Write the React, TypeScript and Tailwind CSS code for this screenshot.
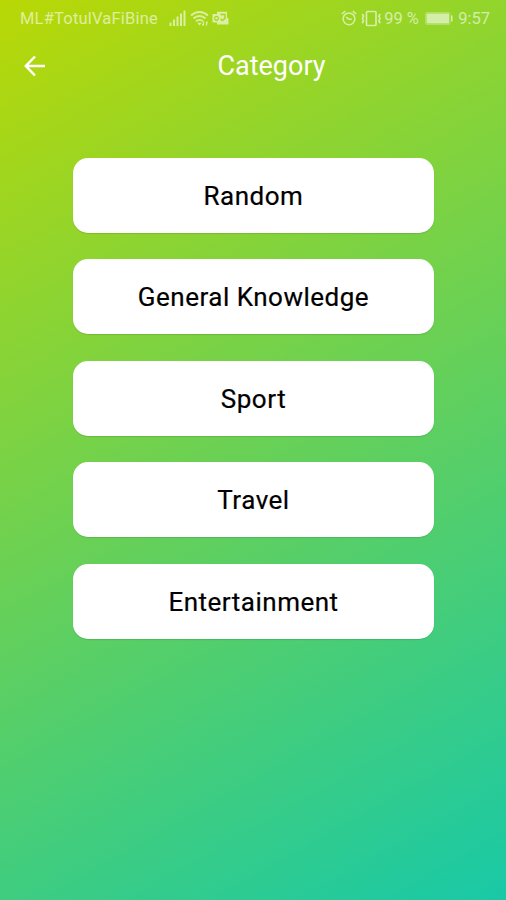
const categories = ["Random", "General Knowledge", "Sport", "Travel", "Entertainment"];

const SignalIcon = () => (
  <svg width="18" height="17" viewBox="0 0 18 17" fill="currentColor">
    <rect x="0.5" y="12.5" width="2" height="3.5" />
    <rect x="4" y="9.5" width="2" height="6.5" />
    <rect x="7.5" y="6.5" width="2" height="9.5" />
    <rect x="11" y="3.5" width="2" height="12.5" />
    <rect x="14.5" y="0.5" width="2" height="15.5" />
  </svg>
);

const WifiIcon = () => (
  <svg width="19" height="17" viewBox="0 0 19 17" fill="none" stroke="currentColor" strokeWidth="1.9">
    <path d="M1 5.5C6 0.8 13 0.8 18 5.5" />
    <path d="M3.5 8.5C7 5.2 12 5.2 15.5 8.5" />
    <path d="M6 11.3C8 9.5 11 9.5 13 11.3" />
    <path d="M7.2 12.7L9.5 15.5L11.8 12.7Z" fill="currentColor" stroke="none" />
    <path d="M13.5 11.5V15.5M12.3 14.2L13.5 15.6M16.5 15.8V11.8M17.7 13L16.5 11.6" strokeWidth="1.2" />
  </svg>
);

const OutlookIcon = () => (
  <svg width="17" height="15" viewBox="0 0 17 15">
    <path
      fill="currentColor"
      fillRule="evenodd"
      d="M0.5 3H5V0.8H15V6.5L16.5 7.5V13.5H5V11.5H0.5ZM4.5 4.7C3.1 4.7 2.1 5.8 2.1 7.3S3.1 9.9 4.5 9.9S6.9 8.8 6.9 7.3S5.9 4.7 4.5 4.7ZM8.5 2.8V4.2H12.3V7L10.5 8.5L8.5 7.3V9L10.5 10.3L13.7 7.8V2.8Z"
    />
    <circle cx="4.5" cy="7.3" r="1.2" fill="currentColor" />
  </svg>
);

const AlarmIcon = () => (
  <svg width="16" height="16" viewBox="0 0 16 16" fill="none" stroke="currentColor" strokeWidth="1.5">
    <circle cx="8" cy="8.8" r="5.9" />
    <path d="M0.8 4L4.3 1.1M15.2 4L11.7 1.1M5 7L8 9.2L10.8 9.2" />
  </svg>
);

const VibrateIcon = () => (
  <svg width="22" height="17" viewBox="0 0 22 17" fill="none" stroke="currentColor" strokeWidth="1.7">
    <rect x="5.5" y="1.5" width="9.5" height="14" rx="1" />
    <path d="M1.2 4L2.5 6L1.5 8.5L2.5 11L1.2 13.2M19.2 4L17.9 6L18.9 8.5L17.9 11L19.2 13.2" />
  </svg>
);

const BatteryIcon = () => (
  <svg width="29" height="13" viewBox="0 0 29 13">
    <rect x="0.6" y="0.6" width="24.3" height="11.8" rx="1" fill="none" stroke="currentColor" strokeOpacity="0.5" />
    <rect x="1.5" y="1.5" width="22.5" height="10" fill="currentColor" />
    <path d="M26.8 3.5V9.5" stroke="currentColor" strokeWidth="1.6" />
  </svg>
);

const StatusBar = () => (
  <div className="flex h-9 items-center justify-between pl-5 pr-4 text-[16.5px] text-white/60">
    <div className="flex items-center">
      <span className="w-[149px] whitespace-nowrap pt-0.5 tracking-[0.2px]">ML#TotulVaFiBine</span>
      <SignalIcon />
      <span className="ml-[3px]">
        <WifiIcon />
      </span>
      <span className="ml-[3px]">
        <OutlookIcon />
      </span>
    </div>
    <div className="flex items-center">
      <AlarmIcon />
      <span className="ml-1">
        <VibrateIcon />
      </span>
      <span className="ml-px w-[41px] whitespace-nowrap pt-0.5">99 %</span>
      <BatteryIcon />
      <span className="ml-1 pt-0.5">9:57</span>
    </div>
  </div>
);

const Header = () => (
  <div className="grid h-[60px] grid-cols-[38px_1fr_38px] items-center text-white">
    <button aria-label="Back" className="ml-6">
      <svg width="22" height="22" viewBox="0 0 22 22" fill="none" stroke="currentColor" strokeWidth="2.5">
        <path d="M21 11H2.5M11 1.5L1.8 11L11 20.5" />
      </svg>
    </button>
    <h1 className="pl-[37px] text-center text-[27px]">Category</h1>
  </div>
);

const CategoryButton = ({ label }: { label: string }) => (
  <button className="h-[75px] w-full rounded-[15px] bg-white pt-0.5 text-[26px] tracking-[0.5px] text-black shadow-[0_1px_1px_rgba(0,0,0,0.12)] [-webkit-text-stroke:0.2px_black]">
    {label}
  </button>
);

const App = () => {
  return (
    <div className="h-[900px] w-[506px] overflow-hidden bg-[linear-gradient(150.65deg,#b9d805,#18c9a7)] font-[Roboto,sans-serif]">
      <StatusBar />
      <Header />
      <div className="flex flex-col gap-[26.4px] pl-[73px] pr-[72px] pt-[62px]">
        {categories.map((category) => (
          <CategoryButton key={category} label={category} />
        ))}
      </div>
    </div>
  );
};

export default App;
